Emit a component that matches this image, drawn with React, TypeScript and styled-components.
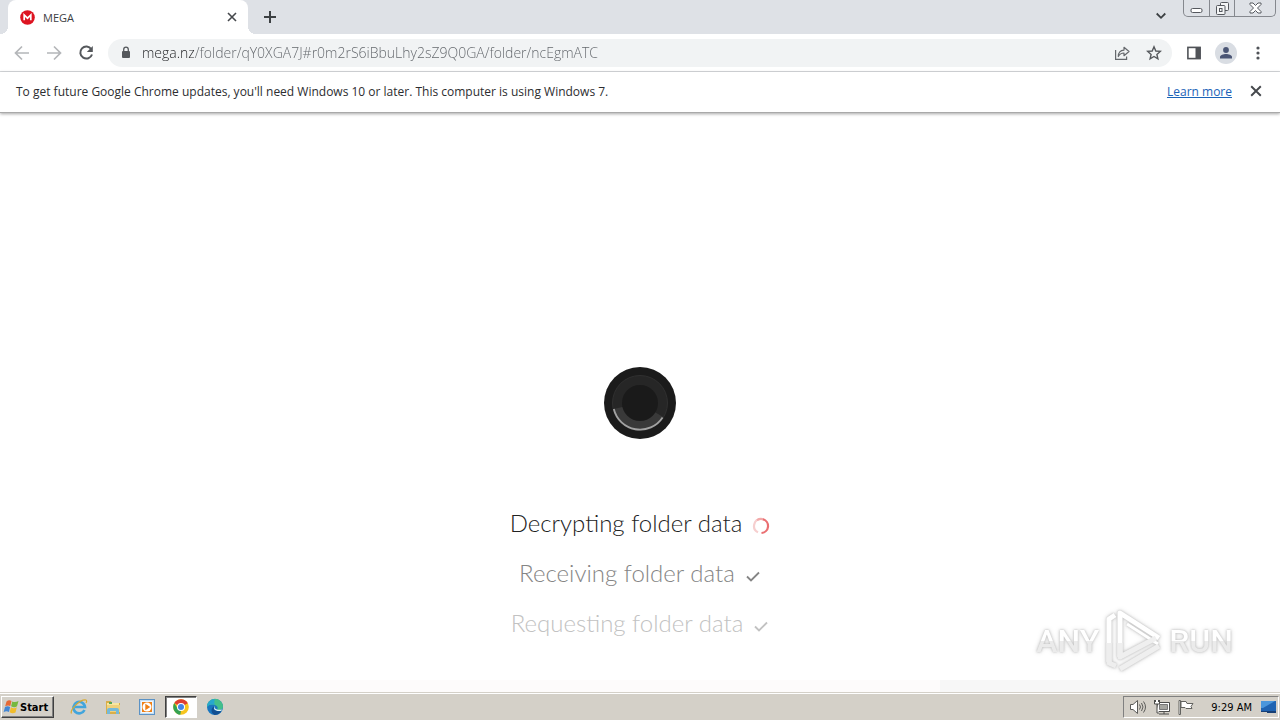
import React from "react";
import styled, { createGlobalStyle, css } from "styled-components";

const uiFont = css`
  font-family: "Open Sans", "Noto Sans", sans-serif;
`;
const tahoma = css`
  font-family: "DejaVu Sans Condensed", "DejaVu Sans", sans-serif;
`;

const GlobalStyle = createGlobalStyle`
  * { box-sizing: border-box; }
  body { margin: 0; background: #fff; }
  button { border: 0; padding: 0; background: none; font: inherit; color: inherit; }
  svg { display: block; }
`;

const Screen = styled.div`
  display: flex;
  flex-direction: column;
  min-height: 100vh;
  position: relative;
  ${uiFont}
`;

const TabStrip = styled.header`
  display: flex;
  align-items: flex-start;
  height: 34px;
  padding-left: 8px;
  background: #dee1e6;
`;

const Tab = styled.div`
  position: relative;
  display: flex;
  align-items: center;
  width: 240px;
  height: 34px;
  margin-right: 5px;
  padding: 0 8px 0 12px;
  background: #fff;
  border-radius: 8px 8px 0 0;
  font-size: 11px;
  color: #3c4043;
  &::before,
  &::after {
    content: "";
    position: absolute;
    bottom: 0;
    width: 8px;
    height: 8px;
  }
  &::before {
    left: -8px;
    background: radial-gradient(circle at 0 0, #dee1e6 8px, #fff 8px);
  }
  &::after {
    right: -8px;
    background: radial-gradient(circle at 100% 0, #dee1e6 8px, #fff 8px);
  }
`;

const TabTitle = styled.span`
  flex: 1;
  margin-left: 8px;
`;

const IconButton = styled.button<{ $size?: number }>`
  display: grid;
  place-items: center;
  flex: none;
  width: ${(p) => p.$size ?? 32}px;
  height: ${(p) => p.$size ?? 32}px;
`;

const Spacer = styled.div`
  flex: 1;
`;

const WindowControls = styled.div`
  display: flex;
  height: 17px;
  margin: 0 4px 0 6px;
  border: 1px solid #85888e;
  border-top: 0;
  border-radius: 0 0 5px 5px;
`;

const WindowButton = styled.button<{ $wide?: boolean }>`
  display: grid;
  place-items: center;
  width: ${(p) => (p.$wide ? 41 : 25)}px;
  & + & {
    border-left: 1px solid #85888e;
  }
`;

const Toolbar = styled.nav`
  display: flex;
  align-items: center;
  height: 38px;
  padding: 0 6px;
  border-bottom: 1px solid #d8dadd;
`;

const AddressBar = styled.label`
  display: flex;
  align-items: center;
  flex: 1;
  height: 28px;
  margin: 0 6px;
  padding: 0 2px 0 12px;
  border-radius: 14px;
  background: #f1f3f4;
`;

const AddressInput = styled.input`
  flex: 1;
  min-width: 0;
  height: 24px;
  margin-left: 10px;
  padding: 0;
  border: 0;
  outline: 0;
  ${uiFont}
  font-size: 14px;
  font-weight: 300;
  color: transparent;
  background: linear-gradient(90deg, #202124 52px, #5f6368 52px);
  background-clip: text;
  -webkit-background-clip: text;
`;

const Avatar = styled.span`
  display: grid;
  place-items: center;
  width: 22px;
  height: 22px;
  border-radius: 50%;
  background: #d9dde3;
`;

const InfoBar = styled.section`
  display: flex;
  align-items: center;
  height: 41px;
  padding: 0 8px 2px 16px;
  border-bottom: 1px solid #a9a9a9;
  box-shadow: 0 1px 3px rgba(0, 0, 0, 0.35);
  font-size: 12px;
  color: #2c2d30;
`;

const LearnMore = styled.a`
  margin-right: 8px;
  color: #1a63b8;
  text-decoration: underline;
`;

const Page = styled.main`
  flex: 1;
  display: grid;
  grid-template-rows: 1fr auto 1fr;
  justify-items: center;
`;

const StepList = styled.ul`
  margin: 0;
  padding: 59px 0 12px;
  list-style: none;
  font-family: Lato, sans-serif;
  font-size: 24px;
  font-weight: 300;
  line-height: 50px;
`;

const Step = styled.li<{ $color: string }>`
  display: flex;
  align-items: center;
  justify-content: center;
  gap: 10px;
  color: ${(p) => p.$color};
`;

const StepIcon = styled.span`
  padding-top: 6px;
`;

const BottomBand = styled.div`
  height: 12px;
  margin-top: -12px;
  background: linear-gradient(90deg, #fdfbfb 0 940px, #f7f7f7 940px);
`;

const Watermark = styled.div`
  position: absolute;
  right: 47px;
  bottom: 46px;
  display: flex;
  align-items: center;
  gap: 6px;
  height: 66px;
  filter: drop-shadow(0 0 1px #bbb) drop-shadow(0 0 2px #ddd);
`;

const WatermarkText = styled.span`
  font-family: Roboto, sans-serif;
  font-size: 32px;
  font-weight: 500;
  line-height: 40px;
  color: transparent;
  background: linear-gradient(#fff 50%, #ebebeb 50%);
  background-clip: text;
  -webkit-background-clip: text;
`;

const Taskbar = styled.footer`
  display: flex;
  align-items: center;
  height: 28px;
  padding: 1px 1px 0;
  background: #d4d0c8;
  border-top: 1px solid #d4d0c8;
  box-shadow: inset 0 1px #fff;
  ${tahoma}
  font-size: 11px;
  color: #000;
`;

const StartButton = styled.button`
  display: flex;
  align-items: center;
  height: 22px;
  width: 53px;
  margin-right: 9px;
  padding-left: 1px;
  border: 1px solid;
  border-color: #fff #404040 #404040 #fff;
  box-shadow: inset -1px -1px #808080;
  font-weight: 700;
`;

const TaskButton = styled.button<{ $active?: boolean }>`
  display: grid;
  place-items: center;
  width: 32px;
  height: 22px;
  margin-right: 2px;
  ${(p) =>
    p.$active &&
    css`
      background: #fff;
      border: 1px solid;
      border-color: #404040 #fff #fff #404040;
      box-shadow: inset 1px 1px #808080;
    `}
`;

const Tray = styled.div`
  display: flex;
  align-items: center;
  gap: 6px;
  height: 22px;
  padding: 0 1px 0 5px;
  border: 1px solid;
  border-color: #808080 #fff #fff #808080;
`;

const Clock = styled.time`
  margin: 0 2px 0 10px;
`;

const Cross = ({ size, width = 1.6 }: { size: number; width?: number }) => (
  <svg width={size} height={size} viewBox="0 0 10 10" stroke="#45484c" strokeWidth={width}>
    <path d="M1 1l8 8M9 1L1 9" />
  </svg>
);

const MegaLogo = () => (
  <svg width="15" height="15" viewBox="0 0 15 15">
    <circle cx="7.5" cy="7.5" r="7.3" fill="#dd1421" />
    <path d="M4.2 10.3V5l3.3 3.2L10.8 5v5.3" fill="none" stroke="#fff" strokeWidth="1.7" />
  </svg>
);

const Arrow = ({ flip }: { flip?: boolean }) => (
  <svg width="16" height="16" viewBox="0 0 16 16" fill="none" stroke="#b4b6b9" strokeWidth="1.7">
    <path d={flip ? "M1 8h13M8 1.5L14.5 8 8 14.5" : "M15 8H2M8 1.5L1.5 8 8 14.5"} />
  </svg>
);

const Reload = () => (
  <svg width="16" height="16" viewBox="0 0 16 16">
    <path d="M13.3 4.2A6 6 0 1 0 14 9.5" fill="none" stroke="#55585c" strokeWidth="2" />
    <path d="M14.8 1v6H8.8z" fill="#55585c" />
  </svg>
);

const Lock = () => (
  <svg width="12" height="14" viewBox="0 0 12 14">
    <rect x="2" y="5" width="8" height="7" rx="1" fill="#55585c" />
    <path d="M3.7 5.5V3.5a2.3 2.3 0 0 1 4.6 0v2" fill="none" stroke="#55585c" strokeWidth="1.3" />
  </svg>
);

const Share = () => (
  <svg width="16" height="16" viewBox="0 0 16 16" fill="none" stroke="#65686c" strokeWidth="1.2">
    <path d="M1.6 5v9.400h11v-3" />
    <path d="M4.300 11.500C4.400 7.300 6.300 5.300 10 5.100V2.300l5 4.200-5 4.200V8C7.300 8 5.700 9 4.300 11.500z" strokeLinejoin="round" />
  </svg>
);

const Star = () => (
  <svg width="16" height="16" viewBox="0 0 16 16" fill="none" stroke="#55585c" strokeWidth="1.4">
    <path d="M8 1.800l1.800 4.200 4.500.400-3.400 3 1 4.400L8 11.500l-3.900 2.300 1-4.400-3.400-3 4.500-.400z" />
  </svg>
);

const SidePanel = () => (
  <svg width="14" height="14" viewBox="0 0 14 14">
    <rect x=".9" y="1.400" width="12.200" height="11.200" fill="none" stroke="#505358" strokeWidth="1.600" />
    <path d="M8.500 1h5v12h-5z" fill="#505358" />
  </svg>
);

const Person = () => (
  <svg width="14" height="14" viewBox="0 0 14 14" fill="#4b5675">
    <circle cx="7" cy="4" r="2.900" />
    <path d="M1 12.500V11c0-2 3.500-3 6-3s6 1 6 3v1.500z" />
  </svg>
);

const Spinner = () => (
  <svg width="72" height="72" viewBox="0 0 72 72" role="img" aria-label="Loading">
    <circle cx="36" cy="36" r="36" fill="#1b1b1b" />
    <circle cx="36" cy="36" r="27.500" fill="#262626" stroke="#303030" />
    <path d="M36 36L9.500 42A27 27 0 0 0 59 50z" fill="#393939" />
    <path d="M9.800 42A27 27 0 0 0 58.600 50.500" fill="none" stroke="#a2a2a2" strokeWidth="1.800" />
    <circle cx="36" cy="36" r="18" fill="#1a1a1a" />
  </svg>
);

const BusyRing = () => (
  <svg width="18" height="18" viewBox="0 0 18 18" fill="none" strokeWidth="2.200">
    <path d="M9 2A7 7 0 0 0 6 15.300" stroke="#f6cfcf" />
    <path d="M5 3.200A7 7 0 0 1 12 2.700" stroke="#f2aaaa" />
    <path d="M11 2.300A7 7 0 0 1 9.500 16" stroke="#ea6f72" />
  </svg>
);

const Check = () => (
  <svg width="16" height="16" viewBox="0 0 16 16" fill="none" stroke="currentColor" strokeWidth="1.800">
    <path d="M2 8.500l4 4 8-8" />
  </svg>
);

const PlayMark = () => (
  <svg width="58" height="64" viewBox="0 0 58 64" fill="none" strokeWidth="5" strokeLinejoin="round">
    <path d="M4 53V10l6-4" stroke="#fff" />
    <path d="M4 34v20l7 3" stroke="#eee" />
    <path d="M15 48V4l39 25" stroke="#fff" />
    <path d="M22 15l31 20" stroke="#fff" strokeWidth="3" />
    <path d="M15 34v14l36-19M15 60l39-23" stroke="#efefef" />
  </svg>
);

const WindowsFlag = () => (
  <svg width="17" height="16" viewBox="0 0 17 16">
    <path d="M3.500 2.500Q6 .500 8.500 2L7.300 7Q5 5.700 2.200 7.200z" fill="#e66a36" />
    <path d="M9.300 2.400Q12 4 15.500 2L14 7.300Q11.500 9 8.100 7.300z" fill="#76b83e" />
    <path d="M2 8Q4.500 6.500 7.100 7.900L6 13Q3.200 11.500.600 13.200z" fill="#4387d4" />
    <path d="M7.900 8.300Q11 10 13.800 8.300L12.500 13.500Q9.500 15 6.700 13.300z" fill="#f1bd2c" />
  </svg>
);

const Explorer = () => (
  <svg width="18" height="18" viewBox="0 0 18 18" fill="none">
    <path d="M14.500 12A5.800 5.800 0 1 1 15 9H5" stroke="#42a5dc" strokeWidth="2.600" />
    <path d="M1.500 15.500C-.500 12 10 1 16 2c1 .500.700 2 0 3" stroke="#d9a92f" strokeWidth="1.200" />
  </svg>
);

const Folder = () => (
  <svg width="18" height="18" viewBox="0 0 18 18">
    <path d="M2 3h5l1 2h8v11H2z" fill="#d9ae49" />
    <path d="M3 5h12v9H3z" fill="#f8e6a0" />
    <path d="M3 7h13v7H3z" fill="#f0d17b" />
    <path d="M3 16v-4q0-2 2-2h8q2 0 2 2v4h-3v-3H6v3z" fill="#75b9d9" />
    <path d="M5 4h3v2H5z" fill="#58a756" />
  </svg>
);

const MediaPlayer = () => (
  <svg width="16" height="16" viewBox="0 0 16 16">
    <rect x=".500" y=".500" width="15" height="15" fill="#c5def2" stroke="#5b92c5" />
    <rect x="2.500" y="2.500" width="11" height="11" fill="#ef7f14" stroke="#eef7ff" />
    <circle cx="8" cy="8" r="4.500" fill="#fff" />
    <path d="M6.300 4.800l5 3.200-5 3.200z" fill="#ef7f14" />
  </svg>
);

const Chrome = () => (
  <svg width="16" height="16" viewBox="0 0 16 16">
    <circle cx="8" cy="8" r="7.800" fill="#f7c51e" />
    <path d="M8 8L1.250 4.100A7.800 7.800 0 0 1 14.750 4.100z" fill="#df3f32" />
    <path d="M1.250 4.100L4.900 10l3.100 1.600L7.300 15.800A7.800 7.800 0 0 1 1.250 4.100z" fill="#35a252" />
    <path d="M8 4.100h6.750L8 8z" fill="#df3f32" />
    <circle cx="8" cy="8" r="4" fill="#fff" />
    <circle cx="8" cy="8" r="3" fill="#4384e6" />
  </svg>
);

const Edge = () => (
  <svg width="18" height="18" viewBox="0 0 18 18">
    <circle cx="9" cy="9" r="8" fill="#1976bf" />
    <path d="M1 9A8 8 0 0 1 17 8.500c0 3-3 4-6 3 1-1 1-3-1-4C6 5.500 2 7 1 9z" fill="#43bf8b" />
    <path d="M1 9A8 8 0 0 1 9 1c-1 3-1 4 0 6-4-1-7 0-8 2z" fill="#27a8ce" />
    <path d="M8.500 8c-2 3 0 6 7 5-2 3-5 4-7 4-4-2-4-7 0-9z" fill="#124f91" />
    <path d="M9 7.500c-2 3 2 5 7 4l-.700 1.300C10 14 6 11 9 7.500z" fill="#e6f4f5" />
  </svg>
);

const Speaker = () => (
  <svg width="18" height="16" viewBox="0 0 18 16" fill="none" stroke="#5b5b59">
    <path d="M1.500 5.500H4L8.500 1.500v13L4 10.500H1.500z" fill="#fff" />
    <path d="M10.500 5.500q2 2.500 0 5M12.500 4q3 4 0 8M14.500 2.500q4 5.500 0 11" />
  </svg>
);

const Network = () => (
  <svg width="18" height="16" viewBox="0 0 18 16" stroke="#4d4d4b">
    <path d="M4.500 3.500h12v9h-12z" fill="#fff" />
    <path d="M6.500 5.500h8v5h-8z" fill="#a5a5a0" stroke="#777" />
    <path d="M6 15h10M11 13v2" />
    <path d="M1.500 1v4h5V1M4 5v9h2M2.500 1v2M5.500 1v2" fill="#fff" />
  </svg>
);

const Flag = () => (
  <svg width="18" height="16" viewBox="0 0 18 16" fill="#fff" stroke="#62625f">
    <path d="M2 1.500h1.500v14H2z" />
    <path d="M4 2.500h5l1 2h6l-2 3 1 2H9l-1-1H4z" />
  </svg>
);

const Desktop = () => (
  <svg width="17" height="14" viewBox="0 0 17 14">
    <path d="M1 1h15v10H1z" fill="#2064b2" />
    <path d="M1 1h14L3 8H1z" fill="#4b97dc" />
    <path d="M1 11h15v1H1zM7 12h9v1H7z" fill="#173f75" />
  </svg>
);

export default function App() {
  return (
    <Screen>
      <GlobalStyle />
      <TabStrip>
        <Tab>
          <MegaLogo />
          <TabTitle>MEGA</TabTitle>
          <IconButton $size={16} aria-label="Close tab">
            <Cross size={10} />
          </IconButton>
        </Tab>
        <IconButton $size={34} aria-label="New tab">
          <svg width="12" height="12" viewBox="0 0 12 12" stroke="#3c4043" strokeWidth="2">
            <path d="M6 0v12M0 6h12" />
          </svg>
        </IconButton>
        <Spacer />
        <IconButton $size={32} aria-label="Search tabs">
          <svg width="10" height="8" viewBox="0 0 10 8" fill="none" stroke="#3c4043" strokeWidth="1.800">
            <path d="M.700 1.500L5 5.800l4.300-4.300" />
          </svg>
        </IconButton>
        <WindowControls>
          <WindowButton aria-label="Minimize">
            <svg width="13" height="13" viewBox="0 0 13 13">
              <rect x="1" y="6.500" width="11" height="4" rx="1.500" fill="#fff" stroke="#55585e" />
            </svg>
          </WindowButton>
          <WindowButton aria-label="Restore">
            <svg width="13" height="13" viewBox="0 0 13 13" fill="#f4f5f6" stroke="#55585e">
              <rect x="4.500" y=".500" width="8" height="8" rx="1" />
              <rect x=".500" y="3.500" width="8.500" height="9" rx="1" />
              <rect x="3.500" y="6.500" width="2.500" height="3" />
            </svg>
          </WindowButton>
          <WindowButton $wide aria-label="Close">
            <svg width="13" height="12" viewBox="0 0 13 12" fill="#fff" stroke="#55585e">
              <path d="M1 1h3l2.500 2.500L9 1h3v1.500L8.500 6 12 9.500V11H9L6.500 8.500 4 11H1V9.500L4.500 6 1 2.500z" />
            </svg>
          </WindowButton>
        </WindowControls>
      </TabStrip>

      <Toolbar aria-label="Browser">
        <IconButton aria-label="Back"><Arrow /></IconButton>
        <IconButton aria-label="Forward"><Arrow flip /></IconButton>
        <IconButton aria-label="Reload"><Reload /></IconButton>
        <AddressBar>
          <Lock />
          <AddressInput
            aria-label="Address"
            defaultValue="mega.nz/folder/qY0XGA7J#r0m2rS6iBbuLhy2sZ9Q0GA/folder/ncEgmATC"
          />
          <IconButton aria-label="Share"><Share /></IconButton>
          <IconButton aria-label="Bookmark"><Star /></IconButton>
        </AddressBar>
        <IconButton aria-label="Side panel"><SidePanel /></IconButton>
        <IconButton aria-label="Profile"><Avatar><Person /></Avatar></IconButton>
        <IconButton aria-label="Menu">
          <svg width="4" height="14" viewBox="0 0 4 14" fill="#505358">
            <circle cx="2" cy="2" r="1.600" />
            <circle cx="2" cy="7" r="1.600" />
            <circle cx="2" cy="12" r="1.600" />
          </svg>
        </IconButton>
      </Toolbar>

      <InfoBar>
        <span>To get future Google Chrome updates, you'll need Windows 10 or later. This computer is using Windows 7.</span>
        <Spacer />
        <LearnMore href="#learn">Learn more</LearnMore>
        <IconButton aria-label="Dismiss"><Cross size={12} /></IconButton>
      </InfoBar>

      <Page>
        <span />
        <Spinner />
        <StepList>
          <Step $color="#222">Decrypting folder data<StepIcon><BusyRing /></StepIcon></Step>
          <Step $color="#858585">Receiving folder data<StepIcon><Check /></StepIcon></Step>
          <Step $color="#c2c2c2">Requesting folder data<StepIcon><Check /></StepIcon></Step>
        </StepList>
      </Page>
      <BottomBand />

      <Watermark>
        <WatermarkText>ANY</WatermarkText>
        <PlayMark />
        <WatermarkText>RUN</WatermarkText>
      </Watermark>

      <Taskbar>
        <StartButton><WindowsFlag />Start</StartButton>
        <TaskButton aria-label="Internet Explorer"><Explorer /></TaskButton>
        <TaskButton aria-label="File Explorer"><Folder /></TaskButton>
        <TaskButton aria-label="Media Player"><MediaPlayer /></TaskButton>
        <TaskButton $active aria-label="Chrome"><Chrome /></TaskButton>
        <TaskButton aria-label="Edge"><Edge /></TaskButton>
        <Spacer />
        <Tray>
          <Speaker />
          <Network />
          <Flag />
          <Clock>9:29 AM</Clock>
          <Desktop />
        </Tray>
      </Taskbar>
    </Screen>
  );
}
